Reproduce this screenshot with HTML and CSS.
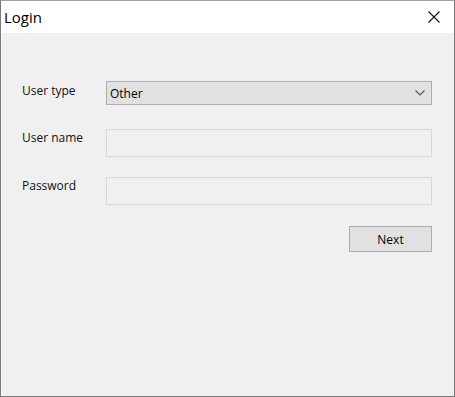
FILE: index.html
```html
<!DOCTYPE html>
<html lang="en">
<head>
  <meta charset="UTF-8" />
  <title>Login</title>
  <link rel="stylesheet" href="styles.css">
</head>
<body>
  <div class="window">
    <div class="title-bar">
      <span class="title">Login</span>
      <span class="close">
        <svg width="12" height="12" viewBox="0 0 12 12">
          <path d="M0.5 0.5 L11.5 11.5 M11.5 0.5 L0.5 11.5" stroke="#111" stroke-width="1.1" fill="none"/>
        </svg>
      </span>
    </div>
    <div class="content">
      <div class="form-row row-type">
        <label>User type</label>
        <div class="select">
          <span>Other</span>
          <svg width="10" height="6" viewBox="0 0 10 6">
            <path d="M0.5 0.5 L5 5 L9.5 0.5" stroke="#555" stroke-width="1.1" fill="none"/>
          </svg>
        </div>
      </div>
      <div class="form-row row-name">
        <label>User name</label>
        <input type="text" class="field">
      </div>
      <div class="form-row row-pass">
        <label>Password</label>
        <input type="password" class="field">
      </div>
      <div class="actions">
        <button>Next</button>
      </div>
    </div>
  </div>
</body>
</html>
```

FILE: styles.css
```css
body {
  margin: 0;
  font-family: 'Open Sans', 'Noto Sans', sans-serif;
  background: #fff;
}

.window {
  width: 455px;
  height: 397px;
  box-sizing: border-box;
  border: 1px solid #7a7a7a;
  border-top-color: #a0a0a0;
  display: flex;
  flex-direction: column;
  background: #f0f0f0;
}

.title-bar {
  height: 32px;
  background: #fff;
  display: flex;
  align-items: center;
  justify-content: space-between;
  padding: 0 14px 0 3px;
}

.title {
  font-size: 15px;
  color: #000;
}

.close {
  display: flex;
  margin-top: -1px;
}

.content {
  flex: 1;
  padding: 48px 21px 0 20px;
  border-left: 1px solid #fafafa;
}

.form-row {
  display: flex;
  align-items: flex-start;
}

.form-row label {
  width: 84px;
  font-size: 12px;
  color: #111;
}

.row-type label {
  padding-top: 1px;
}

.row-name {
  margin-top: 24px;
}

.row-pass {
  margin-top: 20px;
}

.select {
  width: 326px;
  height: 24px;
  box-sizing: border-box;
  border: 1px solid #adadad;
  background: #e1e1e1;
  display: flex;
  align-items: center;
  justify-content: space-between;
  padding: 0 6px 0 3px;
  font-size: 12px;
  color: #000;
}

.select span {
  padding-top: 1px;
}

.field {
  width: 326px;
  height: 28px;
  box-sizing: border-box;
  border: 1px solid #d9d9d9;
  background: #f0f0f0;
  margin: 0;
  outline: none;
}

.actions {
  display: flex;
  justify-content: flex-end;
  margin-top: 21px;
  padding-right: 1px;
}

.actions button {
  width: 83px;
  height: 26px;
  border: 1px solid #adadad;
  background: #e1e1e1;
  font-family: 'Open Sans', 'Noto Sans', sans-serif;
  font-size: 12px;
  color: #000;
  padding: 0;
}
```
